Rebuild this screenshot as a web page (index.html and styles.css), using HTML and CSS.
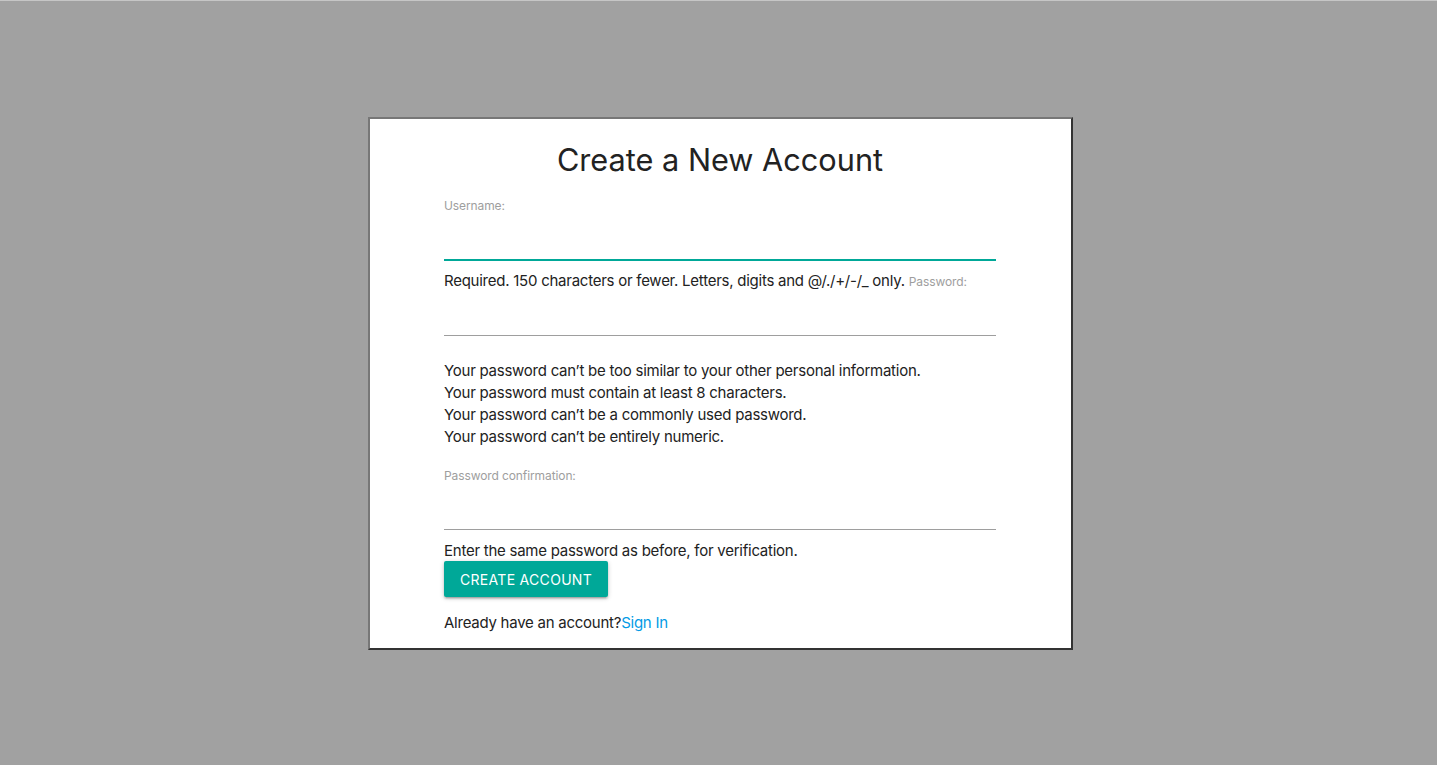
FILE: index.html
```html
<!DOCTYPE html>
<html lang="en">
<head>
<meta charset="utf-8">
<title>Create a New Account</title>
<link rel="stylesheet" href="styles.css">
</head>
<body>
<div class="page">
  <div class="card">
    <h1 class="title">Create a New Account</h1>
    <form class="form">
      <label class="label" for="u">Username:</label>
      <input class="input input-focus" id="u" type="text">
      <div class="help"><span>Required. 150 characters or fewer. Letters, digits and @/./+/-/_ only.</span> <label class="label inline" for="p1">Password:</label></div>
      <input class="input" id="p1" type="password">
      <ul class="rules">
        <li>Your password can’t be too similar to your other personal information.</li>
        <li>Your password must contain at least 8 characters.</li>
        <li>Your password can’t be a commonly used password.</li>
        <li>Your password can’t be entirely numeric.</li>
      </ul>
      <label class="label" for="p2">Password confirmation:</label>
      <input class="input" id="p2" type="password">
      <div class="help">Enter the same password as before, for verification.</div>
      <button class="btn" type="button">CREATE ACCOUNT</button>
      <p class="signin">Already have an account?<a href="#" class="link">Sign In</a></p>
    </form>
  </div>
</div>
</body>
</html>
```
FILE: styles.css
```css
html, body {
  margin: 0;
  padding: 0;
  height: 100%;
}
body {
  background: #a1a1a1;
  border-top: 1px solid #c6c6c6;
  box-sizing: border-box;
  font-family: Inter, "Noto Sans", sans-serif;
  color: #222;
}
.page {
  display: flex;
  justify-content: center;
  padding-top: 116px;
  padding-left: 4px;
}
.card {
  width: 552px;
  background: #fff;
  border: 2px solid;
  border-color: #777 #333 #333 #777;
  padding: 21px 75px 14px 74px;
}
.title {
  margin: 0;
  text-align: center;
  font-weight: 400;
  font-size: 30.7px;
  line-height: 40px;
  color: #222;
}
.form {
  display: flex;
  flex-direction: column;
}
.label {
  display: block;
  margin-top: 18px;
  font-size: 12px;
  line-height: 16px;
  color: #9e9e9e;
  letter-spacing: -0.1px;
}
.label.inline {
  display: inline;
  margin: 0;
}
.input {
  display: block;
  box-sizing: border-box;
  width: 100%;
  height: 46px;
  margin: 0;
  padding: 0;
  border: none;
  border-bottom: 1px solid #9e9e9e;
  background: transparent;
  outline: none;
  font-size: 15px;
}
.input-focus {
  border-bottom-color: #00a898;
  box-shadow: 0 1px 0 0 #00a898;
}
.help {
  margin-top: 11px;
  font-size: 15px;
  line-height: 19px;
  letter-spacing: -0.25px;
}
.rules {
  list-style: none;
  margin: 24px 0 0 0;
  padding: 0;
  font-size: 15px;
  line-height: 22px;
  letter-spacing: -0.25px;
}
.rules + .label {
  margin-top: 20px;
}
.btn {
  align-self: flex-start;
  margin-top: 1px;
  height: 36px;
  padding: 0 16px;
  border: none;
  border-radius: 2px;
  background: #00a898;
  color: #fff;
  font-family: inherit;
  font-size: 14px;
  letter-spacing: .3px;
  box-shadow: 0 2px 2px 0 rgba(0,0,0,.14), 0 3px 1px -2px rgba(0,0,0,.12), 0 1px 5px 0 rgba(0,0,0,.2);
}
.signin {
  margin: 15px 0 0 0;
  font-size: 15px;
  line-height: 22px;
  letter-spacing: -0.25px;
}
.link {
  color: #039be5;
  text-decoration: none;
}
```
